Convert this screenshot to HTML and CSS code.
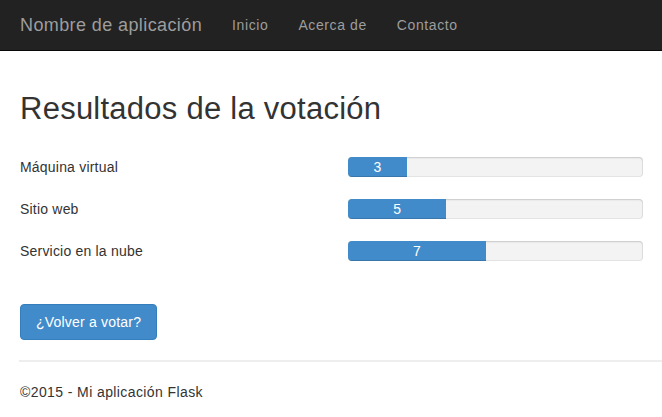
FILE: index.html
```html
<!DOCTYPE html>
<html lang="es">
<head>
<meta charset="utf-8">
<title>Resultados de la votación</title>
<link rel="stylesheet" href="styles.css">
</head>
<body>
<nav class="navbar">
  <a class="brand" href="#">Nombre de aplicación</a>
  <ul class="nav">
    <li><a href="#">Inicio</a></li>
    <li><a href="#">Acerca de</a></li>
    <li><a href="#">Contacto</a></li>
  </ul>
</nav>
<main class="content">
  <h2 class="title">Resultados de la votación</h2>
  <div class="results">
    <div class="row">
      <span class="label">Máquina virtual</span>
      <div class="progress"><div class="bar" style="width: 20%">3</div></div>
    </div>
    <div class="row">
      <span class="label">Sitio web</span>
      <div class="progress"><div class="bar" style="width: 33.333%">5</div></div>
    </div>
    <div class="row">
      <span class="label">Servicio en la nube</span>
      <div class="progress"><div class="bar" style="width: 46.667%">7</div></div>
    </div>
  </div>
  <a class="btn" href="#">¿Volver a votar?</a>
  <hr class="rule">
  <footer class="footer">
    <p>©2015 - Mi aplicación Flask</p>
  </footer>
</main>
</body>
</html>
```

FILE: styles.css
```css
* { box-sizing: border-box; }

html, body {
  margin: 0;
  padding: 0;
  background: #fff;
}

body {
  font-family: "Liberation Sans", Arial, sans-serif;
  font-size: 14px;
  line-height: 20px;
  color: #333;
}

a { text-decoration: none; }

.navbar {
  display: flex;
  align-items: center;
  height: 51px;
  background: #222;
  border-bottom: 1px solid #080808;
  padding: 0 0 0 5px;
}

.brand {
  display: block;
  padding: 15px;
  font-size: 18px;
  line-height: 20px;
  color: #9d9d9d;
  letter-spacing: 0.4px;
}

.nav {
  display: flex;
  list-style: none;
  margin: 0;
  padding: 0;
}

.nav a {
  display: block;
  padding: 15px;
  line-height: 20px;
  color: #9d9d9d;
  letter-spacing: 0.6px;
}

.content {
  padding: 0 19px 0 20px;
}

.title {
  margin: 41px 0 21px;
  font-size: 31px;
  font-weight: 400;
  line-height: 33px;
  color: #333;
  letter-spacing: 0.25px;
}

.results {
  display: flex;
  flex-direction: column;
}

.row {
  display: grid;
  grid-template-columns: 328px 1fr;
  align-items: center;
  height: 42px;
}

.label {
  line-height: 20px;
  letter-spacing: 0.2px;
}

.progress {
  height: 20px;
  background: #f3f3f3;
  border-radius: 4px;
  box-shadow: inset 0 1px 2px rgba(0, 0, 0, 0.12), inset 0 0 0 1px rgba(0, 0, 0, 0.06);
  overflow: hidden;
  display: flex;
}

.bar {
  height: 100%;
  background: #428bca;
  color: #fff;
  font-size: 14px;
  line-height: 20px;
  text-align: center;
  box-shadow: inset 0 -1px 0 rgba(0, 0, 0, 0.15);
}

.btn {
  display: inline-block;
  margin-top: 32px;
  padding: 7px 15px;
  line-height: 20px;
  font-size: 14px;
  color: #fff;
  background: #428bca;
  border: 1px solid #357ebd;
  border-radius: 4px;
  letter-spacing: 0.2px;
}

.rule {
  margin: 20px -19px 20px -1px;
  border: 0;
  height: 2px;
  background: #eeeeee;
}

.footer p {
  margin: 0 0 15px;
  line-height: 20px;
  letter-spacing: 0.4px;
}
```
